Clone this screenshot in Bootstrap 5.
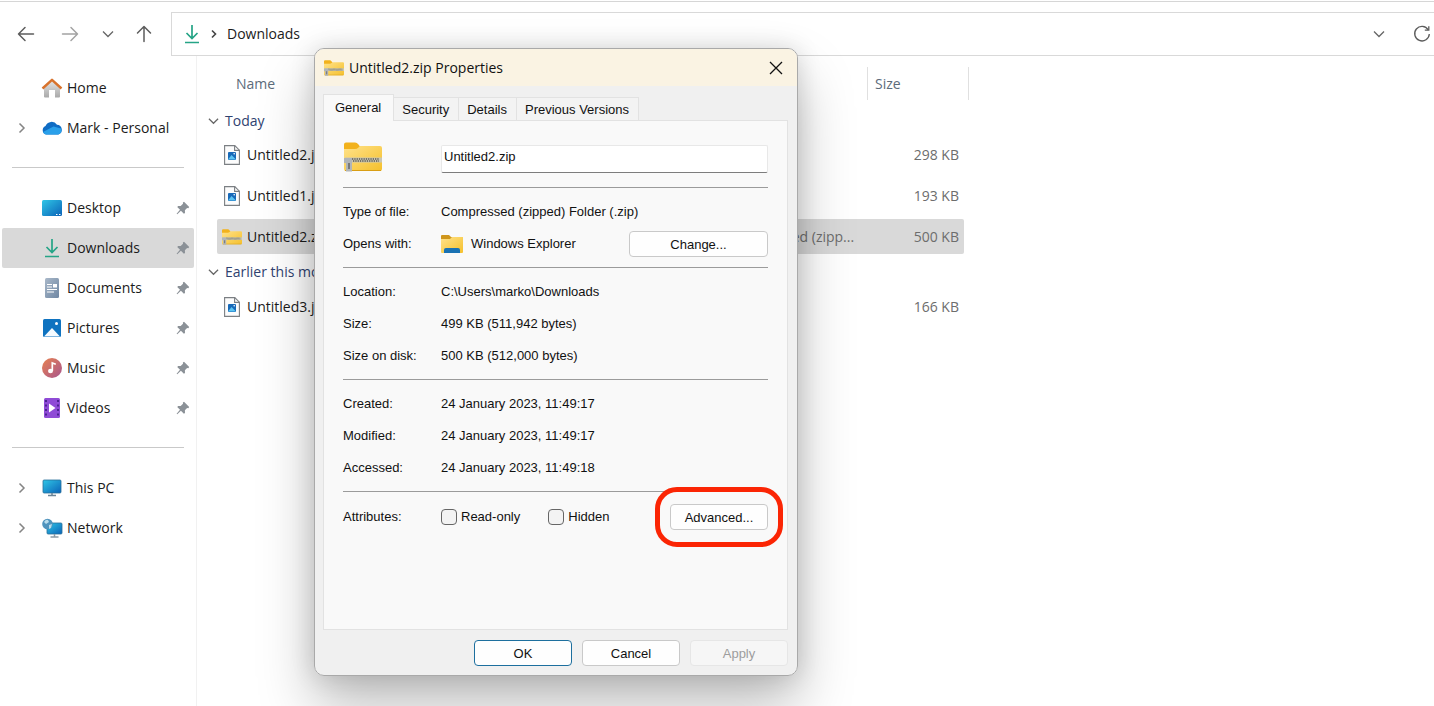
<!DOCTYPE html>
<html lang="en">
<head>
<meta charset="utf-8">
<meta name="viewport" content="width=device-width, initial-scale=1">
<title>Downloads</title>
<link href="https://cdn.jsdelivr.net/npm/bootstrap@5.3.0/dist/css/bootstrap.min.css" rel="stylesheet">
<style>
  body { font-family: "Open Sans", "Noto Sans", sans-serif; font-size: 14px; line-height: 20px; color: #1b1b1b; background: #fff; }
  button { color: inherit; }
  svg { display: block; flex: none; }
  .stroke-icon { fill: none; stroke: #5c5c5c; stroke-width: 1.5; stroke-linecap: round; stroke-linejoin: round; }
  .stroke-icon.faded { stroke: #a3a3a3; }
  .explorer { border-top: 1px solid #d6d6d6; margin-top: 1px; }

  /* toolbar */
  .tool-row { height: 54px; padding: 10px 0 0 4px; }
  .tool-btn { background: none; border: 0; padding: 0; display: flex; align-items: center; justify-content: center; height: 44px; }
  .w-tool { width: 44px; } .w-narrow { width: 32px; } .w-up { width: 40px; } .w-end { width: 24px; }
  .address { height: 44px; border: 1px solid #d9d9d9; border-right: 0; margin-left: 7px; padding-left: 10px; }
  .address .crumb { margin-left: 9px; color: #1b1b1b; text-decoration: none; }
  .address-tools { gap: 19px; }

  /* navigation pane */
  .side { width: 197px; flex: none; border-right: 1px solid #f1f1f1; padding-top: 12px; min-height: calc(100vh - 56px); }
  .side-link { display: flex; align-items: center; height: 40px; margin: 0 2px; padding: 0 4px 0 16px; color: #1b1b1b; text-decoration: none; border-radius: 2px; }
  .side-link.active { background: #d9d9d9; }
  .side-link .twist { width: 12px; margin-right: 11px; }
  .side-link .pin { margin-left: auto; }
  .side-link .label { margin-left: 4px; white-space: nowrap; }
  .side hr { margin: 19px 12px 20px; border-color: #c9c9c9; opacity: 1; }

  /* file list */
  .files { table-layout: fixed; width: 752px; margin: 11px 0 0 20px; border-collapse: separate; border-spacing: 0; flex: none; }
  .files th, .files td { padding: 0; font-weight: 400; white-space: nowrap; }
  .files thead th { height: 33px; color: #5c6b7a; border-right: 1px solid #e0e0e0; padding-left: 7px; }
  .files thead th:first-child { padding-left: 19px; }
  .files .group th { height: 29px; color: #2f4270; }
  .files .group:first-child th { height: 34px; padding-top: 7px; }
  .group-btn { background: none; border: 0; padding: 0; margin-left: -9px; gap: 6px; display: flex; align-items: center; }
  .files .file td { height: 41px; color: #6d6d6d; }
  .files .file td > div { height: 35px; display: flex; align-items: center; }
  .files .file td:first-child > div { color: #1b1b1b; padding-left: 5px; gap: 5px; }
  .files .file td:last-child > div { justify-content: flex-end; padding-right: 5px; margin-right: 5px; }
  .files .kind > div { padding-left: 9px; }
  .files .picked td > div { background: #d9d9d9; }
  .files .picked td:first-child > div { border-radius: 2px 0 0 2px; }
  .files .picked td:last-child > div { border-radius: 0 2px 2px 0; }

  /* properties window, floating over the explorer */
  .props-shadow, .props { position: absolute; left: 314px; top: 48px; width: 484px; height: 628px; border-radius: 10px; }
  .props-shadow { box-shadow: 0 30px 56px rgba(0,0,0,.26), 0 0 24px rgba(0,0,0,.14); }
  .props { border: 1px solid #a9a9a9; background: #f0f0f0; overflow: hidden; font-family: "Liberation Sans", Arial, sans-serif; font-size: 13px; line-height: 16px; color: #111; }
  .props-title { height: 37px; background: #faf3e3; padding: 0 11px 0 9px; font-family: "Open Sans", "Noto Sans", sans-serif; font-size: 14px; }
  .props-title h1 { font-size: 14px; line-height: 20px; font-weight: 400; margin: 0 0 0 5px; }
  .props-body { padding: 8px 9px 9px 8px; }
  .tabs { display: flex; align-items: flex-end; position: relative; margin-bottom: -1px; }
  .tab-btn { height: 24px; border: 1px solid #e2e2e2; border-left: 0; background: #f3f3f3; padding: 2px 9px 0 8px; }
  .tab-btn.on { height: 27px; background: #f9f9f9; border-left: 1px solid #e2e2e2; border-bottom: 0; padding: 0 12px 1px 11px; }
  .pane { height: 510px; background: #f9f9f9; border: 1px solid #e2e2e2; padding: 0 19px; }
  .pane section { padding: 8px 0 7px; border-bottom: 1px solid #9b9b9b; }
  .pane section:last-child { border: 0; padding-top: 9px; }
  .pane dl, .pane dd, .pane dt { margin: 0; font-weight: 400; }
  .prop { display: flex; height: 32px; align-items: center; }
  .prop-key { width: 98px; flex: none; }
  .name-box { height: 28px; width: 100%; border: 1px solid #e8e8e8; border-bottom-color: #7d7d7d; border-radius: 2px; background: #fff; padding: 0 2px 5px; color: #111; }
  .name-row { height: 51px; padding-top: 12px; }
  .name-row .name-box { margin-top: 4px; }
  .push { height: 26px; width: 98px; border: 1px solid #c9c9c9; border-radius: 4px; background: #fefefe; padding: 2px 0 0; }
  .push.wide { width: 139px; }
  .push.main { border-color: #1d6f9e; }
  .push:disabled { background: #f6f6f6; border-color: #e6e6e6; color: #9d9d9d; }
  .foot { gap: 10px; margin-top: 10px; }
  .tick { appearance: none; width: 16px; height: 16px; border: 1px solid #666; border-radius: 4px; background: #f3f3f3; margin: 0; }
  .tick:checked { background: #1d6f9e; }
  .ringed { position: relative; }
  .ringed::after { content: ""; position: absolute; inset: -17px -15px; border: 5px solid #fb2504; border-radius: 22px; pointer-events: none; }
</style>
</head>
<body class="overflow-hidden">
<svg width="0" height="0" class="position-absolute" aria-hidden="true">
  <defs>
    <linearGradient id="gFold" x1="0" y1="0" x2="1" y2="1"><stop offset="0" stop-color="#ffe28a"/><stop offset="1" stop-color="#f5c02c"/></linearGradient>
    <linearGradient id="gBlue" x1="0" y1="0" x2="1" y2="1"><stop offset="0" stop-color="#2fc6e6"/><stop offset="1" stop-color="#0b63b8"/></linearGradient>
    <linearGradient id="gMusic" x1="0" y1="0" x2="1" y2="1"><stop offset="0" stop-color="#e8814f"/><stop offset="1" stop-color="#a8568f"/></linearGradient>
    <linearGradient id="gDoc" x1="0" y1="0" x2="1" y2="1"><stop offset="0" stop-color="#a9b8c9"/><stop offset="1" stop-color="#6f87a3"/></linearGradient>
    <linearGradient id="gHome" x1="0" y1="0" x2="0" y2="1"><stop offset="0" stop-color="#e6e6e6"/><stop offset="1" stop-color="#a9a9a9"/></linearGradient>
    <symbol id="pin" viewBox="0 0 14 14"><path d="M8 .8 13.2 6l-.9 1.2-1.2-.1-2.2 2.2.1 2.6-1.1.9-3-3L1.300 13.200 .6 12.700 4 8.700 1.200 6l1-1.100 2.500.1L7 2.800 6.900 1.500Z" fill="#8b9197"/></symbol>
    <symbol id="zip" viewBox="0 0 38 32">
      <path d="M0 3.500A2 2 0 0 1 2 1.500h9q2 0 3.500 2L17 7v3H0Z" fill="#f2b21d"/>
      <path d="M0 8h11q2 0 3.500-1.500L16 5h20a2 2 0 0 1 2 2v21a2 2 0 0 1-2 2H2a2 2 0 0 1-2-2Z" fill="url(#gFold)"/>
      <path d="M1 29.500h36" stroke="#d99e14"/>
      <path d="M1 19h37" stroke="#c9c6b2" stroke-width="5"/><path d="M8 18h27M9 20h26" stroke="#5d5a4d" stroke-width="1.300" stroke-dasharray="1.300 1"/>
      <path d="M0 17h8v13.500H2V22H0Z" fill="#b1b5b8"/><path d="M4 22h2v6H4Z" fill="#77797b"/>
    </symbol>
    <symbol id="jpg" viewBox="0 0 16 20"><path d="M.6.600h10.200L15.400 5.200v14.200H.6Z" fill="#fcfcfc" stroke="#7b7f83" stroke-width="1.100"/><path d="M10.600.600v4.800h4.800" fill="none" stroke="#7b7f83" stroke-width="1.100"/><rect x="4" y="7" width="8" height="8" rx="1" fill="#1769b8"/><path d="M4 14.500 7.500 10l4.500 4.500Z" fill="#5cc4f2"/><circle cx="10.200" cy="8.700" r=".8" fill="#fff"/></symbol>
    <symbol id="down" viewBox="0 0 16 20"><path d="M8 1v13M2.500 9 8 14.500 13.500 9M1 18.500h14" fill="none" stroke="#25a486" stroke-width="1.700"/></symbol>
    <symbol id="right" viewBox="0 0 8 12"><path d="M1.500 1.500 6 6l-4.500 4.500" fill="none" stroke="#858585" stroke-width="1.500"/></symbol>
    <symbol id="chev" viewBox="0 0 12 8"><path d="M1 1.500 6 6.500l5-5" fill="none" stroke="#666" stroke-width="1.300"/></symbol>
  </defs>
</svg>

<div class="explorer">
  <header class="tool-row d-flex">
    <button class="tool-btn w-tool" aria-label="Back"><svg class="stroke-icon" width="18" height="16"><path d="M8 1.500 1.500 8 8 14.500M1.500 8h15"/></svg></button>
    <button class="tool-btn w-tool" aria-label="Forward"><svg class="stroke-icon faded" width="18" height="16"><path d="M10 1.500 16.500 8 10 14.500M16.500 8h-15"/></svg></button>
    <button class="tool-btn w-narrow" aria-label="Recent locations"><svg width="12" height="8"><use href="#chev"/></svg></button>
    <button class="tool-btn w-up" aria-label="Up"><svg class="stroke-icon" width="16" height="18"><path d="M1.500 8 8 1.500 14.500 8M8 1.500v15"/></svg></button>
    <div class="address d-flex align-items-center flex-grow-1">
      <svg width="20" height="20"><use href="#down"/></svg>
      <svg class="ms-2" width="8" height="10"><path d="M2 1.500 5.500 5 2 8.500" fill="none" stroke="#444" stroke-width="1.600"/></svg>
      <a class="crumb" href="#">Downloads</a>
      <div class="address-tools ms-auto d-flex">
        <button class="tool-btn w-end" aria-label="Previous locations"><svg width="12" height="8"><use href="#chev"/></svg></button>
        <button class="tool-btn w-end" aria-label="Refresh"><svg width="18" height="18"><path d="M15.200 4.800A7.300 7.300 0 1 0 16.300 9" fill="none" stroke="#5c5c5c" stroke-width="1.300"/><path d="M15.800 1.200v4h-4" fill="none" stroke="#5c5c5c" stroke-width="1.300"/></svg></button>
      </div>
    </div>
  </header>

  <div class="d-flex align-items-start">
    <nav class="side" aria-label="Locations">
      <a class="side-link" href="#"><span class="twist"></span>
        <svg width="22" height="20"><path d="M3 9 11 2l8 7v9.500a1 1 0 0 1-1 1h-4V12H8v7.500H4a1 1 0 0 1-1-1Z" fill="url(#gHome)"/><path d="M1.500 10.500 11 1.800l9.500 8.700" fill="none" stroke="#d8722c" stroke-width="2.400" stroke-linejoin="round"/></svg>
        <span class="label">Home</span></a>
      <a class="side-link" href="#"><svg class="twist" height="12"><use href="#right" width="8" height="12"/></svg>
        <svg width="22" height="16"><path d="M5 14.500A4.500 4.500 0 0 1 4.500 6 6.500 6.500 0 0 1 16 4.800 5 5 0 0 1 17.500 14.500Z" fill="#0f6cc4"/><path d="M2 12 12.500 6.500 20 8.500a4.300 4.300 0 0 1-3 6H5A4 4 0 0 1 2 12Z" fill="#2aa0ea"/></svg>
        <span class="label">Mark - Personal</span></a>
      <hr>
      <a class="side-link" href="#"><span class="twist"></span>
        <svg width="22" height="18"><rect x="1" y="1" width="20" height="16" rx="1.500" fill="url(#gBlue)"/><path d="M15 15.500h1.500M18 15.500h1.500" stroke="#fff"/></svg>
        <span class="label">Desktop</span><svg class="pin" width="14" height="14"><use href="#pin"/></svg></a>
      <a class="side-link active" href="#" aria-current="page"><span class="twist"></span>
        <svg width="22" height="20"><use href="#down"/></svg>
        <span class="label">Downloads</span><svg class="pin" width="14" height="14"><use href="#pin"/></svg></a>
      <a class="side-link" href="#"><span class="twist"></span>
        <svg width="22" height="20"><rect x="4" width="14" height="20" rx="1.500" fill="url(#gDoc)"/><path d="M6 6.500h5M6 9h5M6 11.500h10M6 14h7" stroke="#fff" stroke-width="1.200"/><rect x="12" y="6" width="4" height="3.500" fill="#fff"/></svg>
        <span class="label">Documents</span><svg class="pin" width="14" height="14"><use href="#pin"/></svg></a>
      <a class="side-link" href="#"><span class="twist"></span>
        <svg width="22" height="18"><rect x="2" width="18" height="18" rx="1.500" fill="#0f73c0"/><path d="M3 17.500 11 9l8 8.500Z" fill="#f4faff"/><circle cx="15.500" cy="4.500" r="1.500" fill="#fff"/></svg>
        <span class="label">Pictures</span><svg class="pin" width="14" height="14"><use href="#pin"/></svg></a>
      <a class="side-link" href="#"><span class="twist"></span>
        <svg width="22" height="20"><circle cx="11" cy="10" r="10" fill="url(#gMusic)"/><ellipse cx="9.500" cy="13" rx="2.500" ry="2.200" fill="#fff"/><path d="M11.300 13V5l3.500 1.200" fill="none" stroke="#fff" stroke-width="1.700"/></svg>
        <span class="label">Music</span><svg class="pin" width="14" height="14"><use href="#pin"/></svg></a>
      <a class="side-link" href="#"><span class="twist"></span>
        <svg width="22" height="20"><rect x="3" width="16" height="20" rx="1.500" fill="#8f4bd6"/><path d="M5 2v16M17 2v16" stroke="#4b2391" stroke-width="2" stroke-dasharray="2 2.500"/><path d="M8 5.500v9l6.500-4.500Z" fill="#fff"/></svg>
        <span class="label">Videos</span><svg class="pin" width="14" height="14"><use href="#pin"/></svg></a>
      <hr>
      <a class="side-link" href="#"><svg class="twist" height="12"><use href="#right" width="8" height="12"/></svg>
        <svg width="22" height="18"><rect x="2" y="1" width="18" height="13" rx="1" fill="url(#gBlue)" stroke="#2a6f99" stroke-width=".8"/><path d="M11 14v2.500M7 16.500h8" stroke="#6b8597" stroke-width="1.500"/></svg>
        <span class="label">This PC</span></a>
      <a class="side-link" href="#"><svg class="twist" height="12"><use href="#right" width="8" height="12"/></svg>
        <svg width="22" height="20"><rect x="6" y="5" width="15" height="11" rx="1" fill="url(#gBlue)" stroke="#2a6f99" stroke-width=".8"/><path d="M13.500 16v2.500M9.500 19h8" stroke="#8a9aa6" stroke-width="1.500"/><circle cx="6.500" cy="6" r="5.300" fill="#4f93bd"/><path d="M3 4q2-3 4-2l1 2-3 2ZM8 7l3-1-1 4-2 1Z" fill="#b9dcec"/></svg>
        <span class="label">Network</span></a>
    </nav>

    <table class="files">
      <colgroup><col><col style="width:151px"><col style="width:101px"></colgroup>
      <thead><tr><th scope="col">Name</th><th scope="col"></th><th scope="col">Size</th></tr></thead>
      <tbody>
        <tr class="group"><th colspan="3"><button class="group-btn"><svg width="11" height="8"><use href="#chev"/></svg>Today</button></th></tr>
        <tr class="file"><td><div><svg width="20" height="20"><use href="#jpg"/></svg>Untitled2.jpg</div></td><td class="kind"></td><td><div>298 KB</div></td></tr>
        <tr class="file"><td><div><svg width="20" height="20"><use href="#jpg"/></svg>Untitled1.jpg</div></td><td class="kind"></td><td><div>193 KB</div></td></tr>
        <tr class="file picked"><td><div><svg width="20" height="18"><use href="#zip"/></svg>Untitled2.zip</div></td><td class="kind"><div>Compressed (zipp...</div></td><td><div>500 KB</div></td></tr>
        <tr class="group"><th colspan="3"><button class="group-btn"><svg width="11" height="8"><use href="#chev"/></svg>Earlier this month</button></th></tr>
        <tr class="file"><td><div><svg width="20" height="20"><use href="#jpg"/></svg>Untitled3.jpg</div></td><td class="kind"></td><td><div>166 KB</div></td></tr>
      </tbody>
    </table>
  </div>
</div>

<div class="props-shadow"></div>
<div class="props" role="dialog" aria-labelledby="propsTitle">
  <div class="props-title d-flex align-items-center">
    <svg width="20" height="18"><use href="#zip"/></svg>
    <h1 id="propsTitle">Untitled2.zip Properties</h1>
    <button class="tool-btn ms-auto" aria-label="Close"><svg width="20" height="14"><path d="M4 1 16 13M16 1 4 13" stroke="#111" stroke-width="1.300"/></svg></button>
  </div>
  <div class="props-body">
    <div class="tabs" role="tablist">
      <button class="tab-btn on" role="tab" aria-selected="true">General</button>
      <button class="tab-btn" role="tab" aria-selected="false">Security</button>
      <button class="tab-btn" role="tab" aria-selected="false">Details</button>
      <button class="tab-btn" role="tab" aria-selected="false">Previous Versions</button>
    </div>
    <div class="pane" role="tabpanel">
      <section>
        <div class="name-row d-flex">
          <div class="prop-key"><svg width="40" height="32"><use href="#zip"/></svg></div>
          <input class="name-box" type="text" value="Untitled2.zip" aria-label="File name">
        </div>
      </section>
      <section>
        <dl>
          <div class="prop"><dt class="prop-key">Type of file:</dt><dd>Compressed (zipped) Folder (.zip)</dd></div>
          <div class="prop"><dt class="prop-key">Opens with:</dt>
            <dd class="d-flex align-items-center flex-grow-1"><svg width="22" height="20"><path d="M0 2a1 1 0 0 1 1-1h7l2 2h11a1 1 0 0 1 1 1v4H0Z" fill="#cf961c"/><path d="M0 5h9l2-2h11v15a1 1 0 0 1-1 1H1a1 1 0 0 1-1-1Z" fill="url(#gFold)"/><path d="M3 19v-3a2 2 0 0 1 2-2h12a2 2 0 0 1 2 2v3Z" fill="#1a72b3"/></svg><span class="ms-2">Windows Explorer</span>
              <button class="push wide ms-auto">Change...</button></dd></div>
        </dl>
      </section>
      <section>
        <dl>
          <div class="prop"><dt class="prop-key">Location:</dt><dd>C:\Users\marko\Downloads</dd></div>
          <div class="prop"><dt class="prop-key">Size:</dt><dd>499 KB (511,942 bytes)</dd></div>
          <div class="prop"><dt class="prop-key">Size on disk:</dt><dd>500 KB (512,000 bytes)</dd></div>
        </dl>
      </section>
      <section>
        <dl>
          <div class="prop"><dt class="prop-key">Created:</dt><dd>24 January 2023, 11:49:17</dd></div>
          <div class="prop"><dt class="prop-key">Modified:</dt><dd>24 January 2023, 11:49:17</dd></div>
          <div class="prop"><dt class="prop-key">Accessed:</dt><dd>24 January 2023, 11:49:18</dd></div>
        </dl>
      </section>
      <section>
        <div class="prop">
          <span class="prop-key">Attributes:</span>
          <input class="tick" type="checkbox" id="ro"><label class="ms-1 me-4 pe-1" for="ro">Read-only</label>
          <input class="tick" type="checkbox" id="hid"><label class="ms-1" for="hid">Hidden</label>
          <span class="ringed ms-auto"><button class="push d-block">Advanced...</button></span>
        </div>
      </section>
    </div>
    <div class="foot d-flex justify-content-end">
      <button class="push main">OK</button>
      <button class="push">Cancel</button>
      <button class="push" disabled>Apply</button>
    </div>
  </div>
</div>
<script src="https://cdn.jsdelivr.net/npm/bootstrap@5.3.0/dist/js/bootstrap.bundle.min.js"></script>
</body>
</html>
